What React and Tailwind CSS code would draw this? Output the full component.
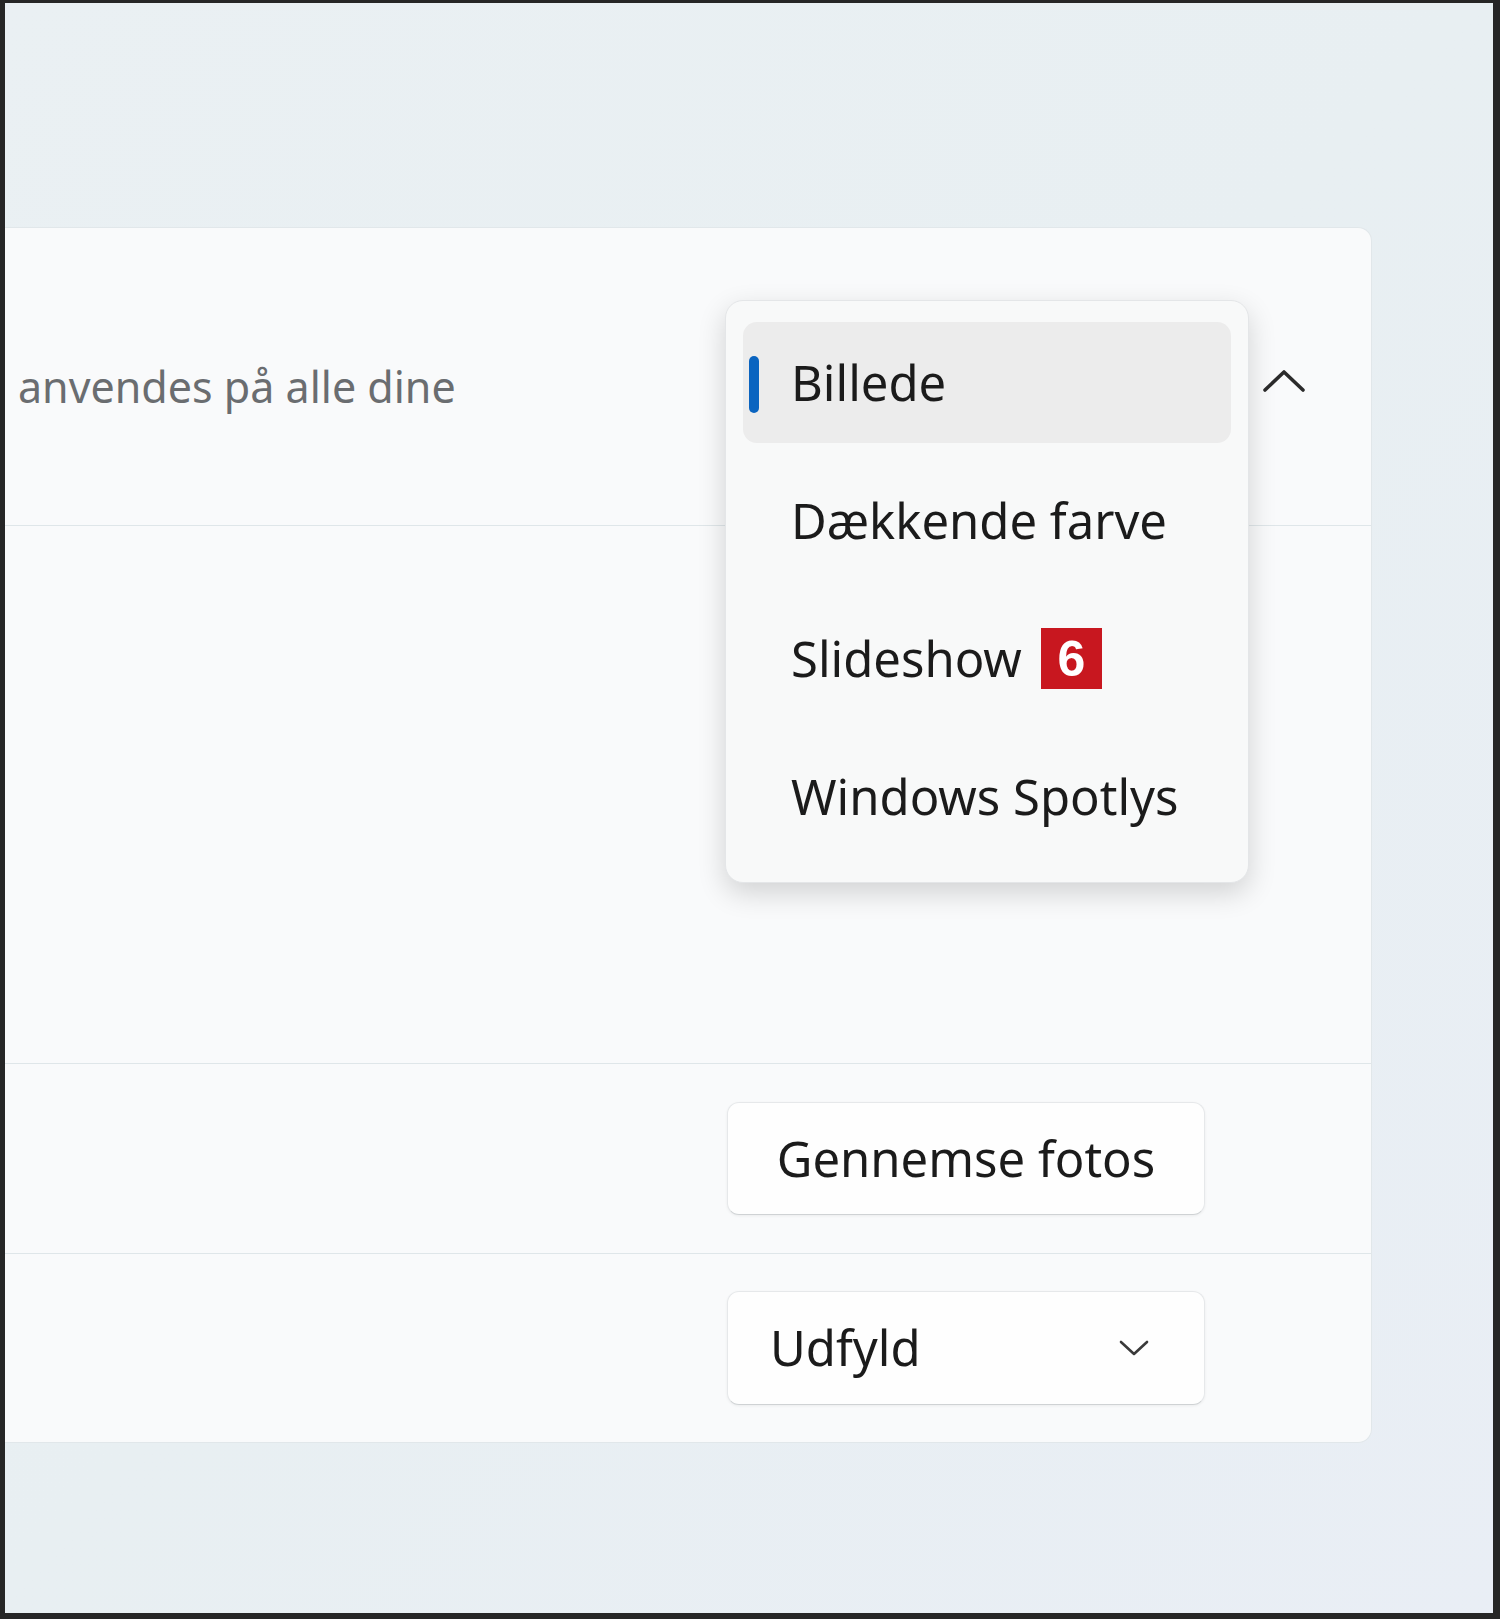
import React from "react";

function ChevronUp() {
  return (
    <svg width="44" height="24" viewBox="0 0 44 24" fill="none">
      <path d="M3 21 L22 3 L41 21" stroke="#2b2b2b" strokeWidth="3.6" strokeLinecap="round" strokeLinejoin="round" />
    </svg>
  );
}

function ChevronDown() {
  return (
    <svg width="30" height="16" viewBox="0 0 30 16" fill="none">
      <path d="M2 2 L15 14 L28 2" stroke="#3a3a3a" strokeWidth="2.6" strokeLinecap="round" strokeLinejoin="round" />
    </svg>
  );
}

export default function App() {
  const items = ["Billede", "Dækkende farve", "Slideshow", "Windows Spotlys"];
  return (
    <div
      className="w-[1500px] h-[1619px] bg-[#262626] pt-[3px] pl-[5px] pr-[7px] pb-[6px]"
      style={{ fontFamily: "'Noto Sans', 'Open Sans', sans-serif" }}
    >
      <div className="h-full w-full overflow-hidden bg-gradient-to-br from-[#eaf0f3] via-[#e8eff2] to-[#e9eef5] pt-[224px] pr-[121px]">
        <div className="relative h-[1216px] rounded-r-[14px] border border-l-0 border-[#e1e7ea] bg-[#f9fafb] flex flex-col">
          {/* Row 1 */}
          <div className="h-[298px] shrink-0 border-b border-[#dfe6e9] pl-[13px] pt-[131px]">
            <div className="text-[43px] leading-[56px] text-[#6a6d70]">anvendes på alle dine</div>
            <div className="absolute left-[1257px] top-[141px]">
              <ChevronUp />
            </div>
          </div>
          {/* Row 2 */}
          <div className="h-[538px] shrink-0 border-b border-[#dfe6e9]"></div>
          {/* Row 3 */}
          <div className="h-[190px] shrink-0 border-b border-[#dfe6e9] flex items-center justify-end pr-[166px]">
            <button className="w-[478px] h-[113px] rounded-[12px] bg-[#fefefe] border border-[#e6e8ea] border-b-[#cfd2d4] shadow-[0_1px_3px_rgba(0,0,0,0.06)] text-[49px] text-[#1b1b1b] flex items-center justify-center">
              Gennemse fotos
            </button>
          </div>
          {/* Row 4 */}
          <div className="flex-1 flex items-center justify-end pr-[166px]">
            <div className="w-[478px] h-[114px] rounded-[12px] bg-[#fefefe] border border-[#e6e8ea] border-b-[#cfd2d4] shadow-[0_1px_3px_rgba(0,0,0,0.06)] flex items-center justify-between pl-[42px] pr-[55px]">
              <span className="text-[49px] text-[#1b1b1b]">Udfyld</span>
              <ChevronDown />
            </div>
          </div>

          {/* Open dropdown popup */}
          <div className="absolute left-[720px] top-[72px] w-[524px] h-[583px] rounded-[18px] bg-[#f8f9f9] border border-[#e4e6e8] shadow-[0_10px_28px_rgba(0,0,0,0.16)] flex flex-col gap-[17px] pt-[21px] px-[17px]">
            {items.map((label, i) => (
              <div
                key={label}
                className={
                  i === 0
                    ? "relative h-[121px] rounded-[14px] bg-[#ececec] flex items-center pl-[48px]"
                    : "relative h-[121px] rounded-[14px] flex items-center pl-[48px]"
                }
              >
                {i === 0 && (
                  <span className="absolute left-[6px] top-[34px] w-[10px] h-[57px] rounded-full bg-[#0a64c0]"></span>
                )}
                <span className="text-[49px] leading-none text-[#1b1b1b]">{label}</span>
                {i === 2 && (
                  <span
                    className="ml-[19px] w-[61px] h-[61px] bg-[#c8171f] flex items-center justify-center text-white text-[50px] font-bold leading-none"
                    style={{ fontFamily: "'Liberation Sans', Arial, sans-serif" }}
                  >
                    6
                  </span>
                )}
              </div>
            ))}
          </div>
        </div>
      </div>
    </div>
  );
}
